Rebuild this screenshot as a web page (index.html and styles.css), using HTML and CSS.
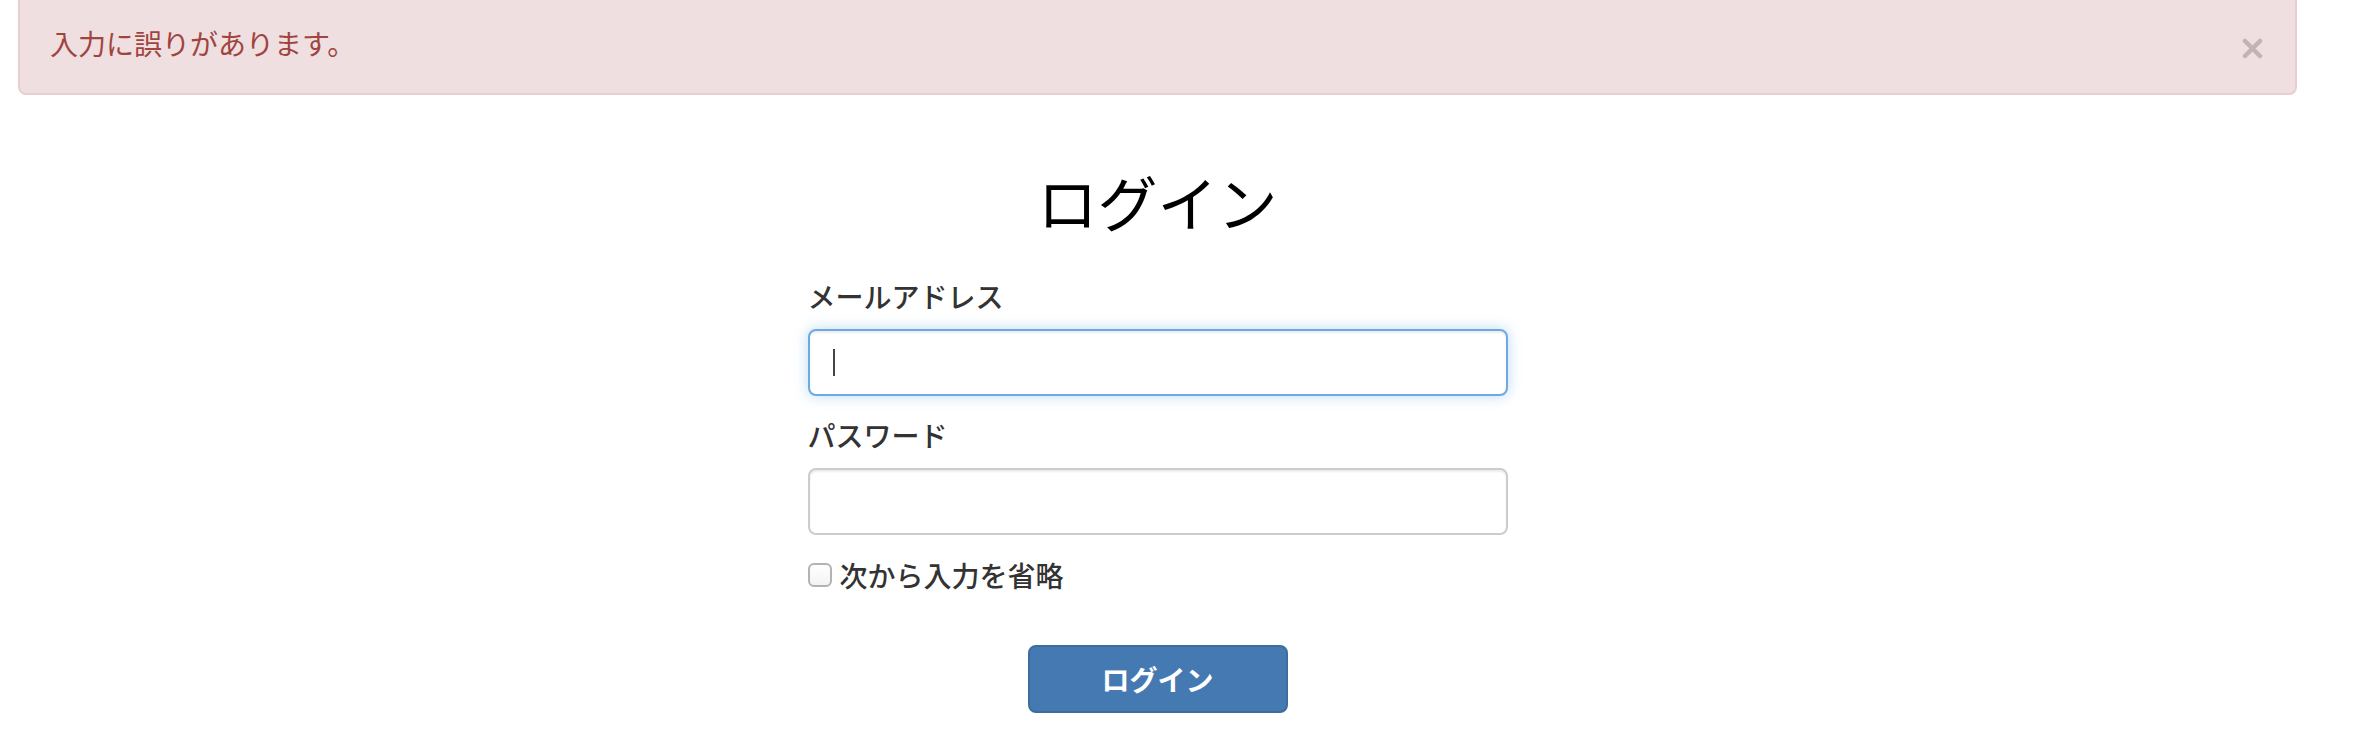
FILE: index.html
```html
<!DOCTYPE html>
<html lang="ja">
<head>
<meta charset="utf-8">
<title>ログイン</title>
<link rel="stylesheet" href="styles.css">
</head>
<body>
<div class="page">
  <div class="alert" role="alert">
    <span class="alert-text">入力に誤りがあります。</span>
    <svg class="close" width="21" height="21" viewBox="0 0 21 21" aria-label="閉じる">
      <path d="M3 3 L18 18 M18 3 L3 18" stroke="#c3b3b4" stroke-width="4.5" stroke-linecap="round" fill="none"/>
    </svg>
  </div>
  <form class="login">
    <h2 class="title">ログイン</h2>
    <div class="group">
      <label class="label" for="email">メールアドレス</label>
      <div class="field">
        <input id="email" class="input focused" type="email">
        <span class="caret"></span>
      </div>
    </div>
    <div class="group">
      <label class="label" for="pw">パスワード</label>
      <div class="field">
        <input id="pw" class="input" type="password">
      </div>
    </div>
    <label class="remember">
      <span class="box"></span>
      <span class="remember-text">次から入力を省略</span>
    </label>
    <div class="actions">
      <button type="button" class="btn">ログイン</button>
    </div>
  </form>
</div>
</body>
</html>
```
FILE: styles.css
```css
html, body {
  margin: 0;
  padding: 0;
  background: #ffffff;
}
body {
  font-family: "Noto Sans CJK JP", "Noto Sans", sans-serif;
  color: #333333;
}
.page {
  padding: 0 67px 0 18px;
}
.alert {
  display: flex;
  justify-content: space-between;
  align-items: flex-start;
  background: #efdfe0;
  border: 2px solid #e8cdd2;
  border-top: none;
  border-radius: 0 0 8px 8px;
  padding: 23px 32px 30px 30px;
  color: #a0443f;
  font-size: 28px;
  line-height: 40px;
}
.close {
  margin-top: 15px;
  flex: none;
}
.login {
  width: 700px;
  margin: 0 auto;
}
.title {
  margin: 73px 0 0;
  font-size: 60px;
  line-height: 66px;
  font-weight: 400;
  color: #000000;
  text-align: center;
}
.group {
  display: flex;
  flex-direction: column;
}
.group + .group {
  margin-top: 19px;
}
.label {
  display: block;
  margin-top: 42px;
  margin-bottom: 13px;
  font-size: 28px;
  line-height: 40px;
  font-weight: 500;
  color: #333333;
}
.group + .group .label {
  margin-top: 0;
}
.field {
  position: relative;
}
.input {
  display: block;
  box-sizing: border-box;
  width: 700px;
  height: 67px;
  margin: 0;
  padding: 0 24px;
  border: 2px solid #cccccc;
  border-radius: 8px;
  background: #ffffff;
  box-shadow: inset 0 2px 2px rgba(0, 0, 0, 0.075);
  font-size: 28px;
  outline: none;
}
.input.focused {
  border-color: #6fa9e2;
  box-shadow: inset 0 2px 2px rgba(0, 0, 0, 0.075), 0 0 14px rgba(102, 175, 233, 0.45);
}
.caret {
  position: absolute;
  left: 25px;
  top: 20px;
  width: 2px;
  height: 27px;
  background: #444444;
}
.remember {
  display: flex;
  align-items: center;
  margin-top: 20px;
  height: 40px;
  font-size: 28px;
  line-height: 40px;
  font-weight: 500;
  color: #333333;
}
.box {
  box-sizing: border-box;
  width: 24px;
  height: 24px;
  border: 2px solid #b3b3b3;
  border-radius: 6px;
  background: linear-gradient(#ffffff, #f3f3f3);
  margin-right: 8px;
}
.actions {
  display: flex;
  justify-content: center;
  margin-top: 50px;
}
.btn {
  box-sizing: border-box;
  width: 260px;
  height: 68px;
  padding: 0;
  border: 2px solid #3d6da0;
  border-radius: 8px;
  background: #4579b1;
  color: #ffffff;
  font-family: "Noto Sans CJK JP", "Noto Sans", sans-serif;
  font-size: 28px;
  line-height: 40px;
  font-weight: 700;
}
```
